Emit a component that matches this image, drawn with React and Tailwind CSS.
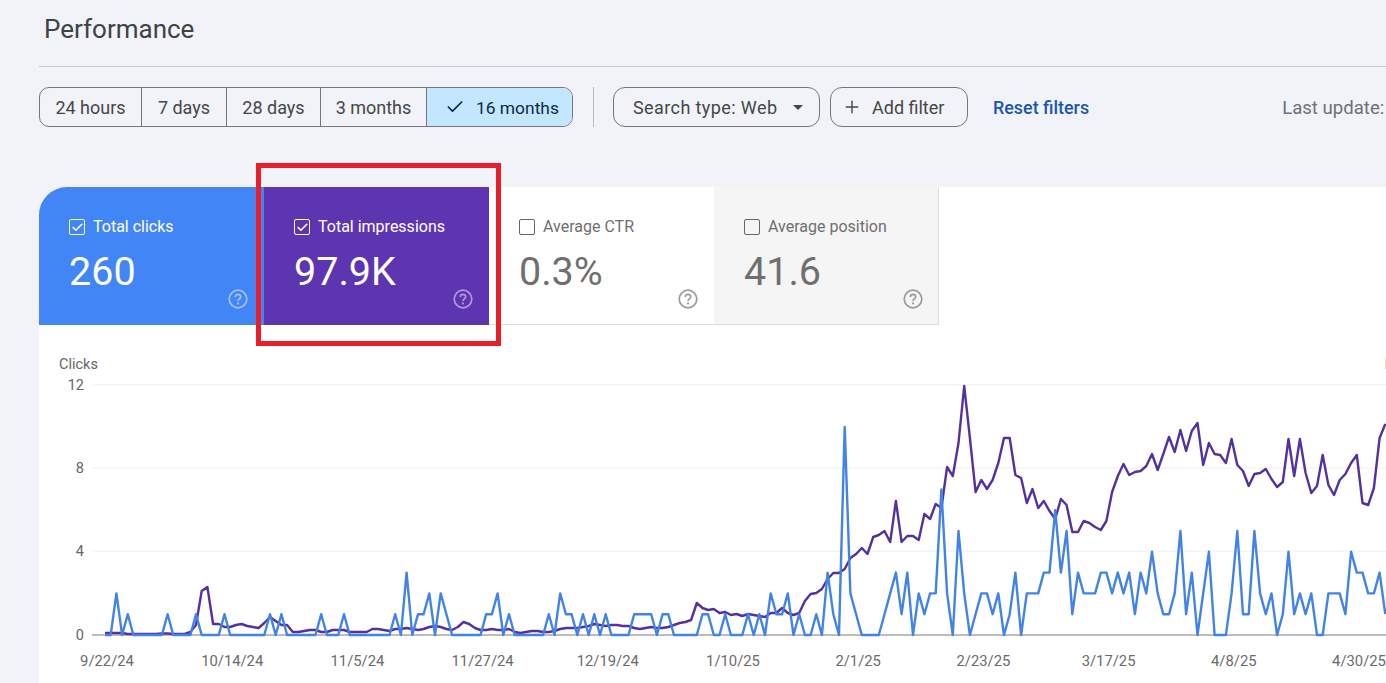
import { Check, Plus } from "lucide-react";

const ranges = [
  { label: "24 hours", width: "w-[102px]" },
  { label: "7 days", width: "w-[85px]" },
  { label: "28 days", width: "w-[94px]" },
  { label: "3 months", width: "w-[106px]" },
];

const metrics = [
  { label: "Total clicks", value: "260", on: true, box: "bg-[#4285f4] text-white rounded-tl-[28px]", help: "text-white/50" },
  { label: "Total impressions", value: "97.9K", on: true, box: "bg-[#5e35b1] text-white", help: "text-white/50" },
  { label: "Average CTR", value: "0.3%", on: false, box: "bg-white text-[#6f6f6f] shadow-[inset_0_-1px_0_#dddddd]", help: "text-[#9a9a9a]" },
  { label: "Average position", value: "41.6", on: false, box: "bg-[#f5f5f5] text-[#6f6f6f] shadow-[inset_0_-1px_0_#dddddd,inset_-1px_0_0_#dddddd]", help: "text-[#9a9a9a]" },
];

// one value per day from 9/22/24
const clicks = [
  0,0,2,0,1,0,0,0,0,0,0,1,0,0,0,0,1,0,0,0,0,1,0,0,0,0,0,0,0,1,
  0,1,0,0,0,0,0,0,1,0,0,0,1,0,0,0,0,0,0,0,0,1,0,3,0,1,1,2,0,2,
  1,0,0,0,0,0,0,1,1,2,0,1,0,0,0,0,0,0,1,0,2,1,1,0,1,0,1,0,1,0,
  0,0,0,1,1,1,1,0,1,1,0,0,0,0,0,1,1,0,0,1,0,0,0,1,0,1,0,2,1,1,
  2,0,1,0,0,1,0,3,1,0,10,2,1,0,0,0,0,1,2,3,1,3,0,2,1,2,2,7,2,0,
  5,2,0,1,2,2,1,2,0,1,3,0,2,2,2,3,3,6,3,5,1,3,2,2,2,3,3,2,3,2,
  3,1,3,2,4,2,1,1,2,5,1,3,0,2,4,0,0,0,2,5,1,1,5,2,1,2,0,1,4,1,
  2,1,2,0,0,2,2,2,1,4,3,3,2,2,3,1,
];

// pixels above the baseline
const impressions = [
  2,2,2,2,1,1,1,1,1,1,1.5,1.5,1,1,1,3,10,44,48,11,11,8,8,10,11,9,8,7,12,18,
  14,10,10,3,3,4,5,5,3,3,5,5,5,3,3,3,3,6,6,5,4,6,6,7,6,5,6,8,9,8,
  6,5,8,13,11,7,5,5,6,5,5,6,3,2,3,4,4,3,3,4,6,7,7,7,8,9,11,10,9,10,
  10,9,9,7,6,7,8,7,7,8,10,12,13,15,32,27,25,26,22,23,20,21,19,21,20,19,18,22,22,27,
  22,20,22,34,41,42,46,56,62,62,66,77,81,87,81,98,100,104,93,134,93,99,99,95,121,116,131,127,168,159,
  192,249,197,143,155,146,155,172,197,197,160,157,132,146,127,134,124,116,136,130,103,103,114,112,108,105,114,143,159,171,
  160,163,164,169,181,165,181,198,183,205,184,204,212,170,192,181,180,172,196,170,164,149,161,162,166,156,148,153,196,159,
  196,162,142,149,180,150,140,155,161,172,180,132,130,147,197,211,
];

const X0 = 105;
const STEP = 5.69;
const BASE = 635;

const clickPoints = clicks.map((v, i) => `${(X0 + i * STEP).toFixed(1)},${(BASE - v * 20.8).toFixed(1)}`).join(" ");
const impressionPoints = impressions.map((h, i) => `${(X0 + i * STEP).toFixed(1)},${BASE - h}`).join(" ");

const yTicks = [
  { label: "12", y: 385 },
  { label: "8", y: 468 },
  { label: "4", y: 551 },
];

const dates = ["9/22/24", "10/14/24", "11/5/24", "11/27/24", "12/19/24", "1/10/25", "2/1/25", "2/23/25", "3/17/25", "4/8/25", "4/30/25"];

function HelpIcon({ className }) {
  return (
    <svg width="20" height="20" viewBox="0 0 20 20" fill="none" className={className}>
      <circle cx="10" cy="10" r="8.8" stroke="currentColor" strokeWidth="1.7" />
      <path d="M7.3 8a2.7 2.7 0 0 1 5.4 0c0 1.8-2.7 2-2.7 3.9" stroke="currentColor" strokeWidth="1.7" />
      <circle cx="10" cy="14.4" r="1.05" fill="currentColor" />
    </svg>
  );
}

function MetricCard({ label, value, on, box, help }) {
  return (
    <div className={`relative w-[225px] h-[138px] pl-[30px] pt-[30px] ${box}`}>
      <div className="flex items-center gap-2 h-5">
        {on ? (
          <span className="flex items-center justify-center w-4 h-4 rounded-[2px] border border-white">
            <Check size={13} strokeWidth={3} />
          </span>
        ) : (
          <span className="w-4 h-4 rounded-[2px] border border-[#666666]" />
        )}
        <span className="text-[16px] whitespace-nowrap">{label}</span>
      </div>
      <div className="text-[39.5px] leading-[46px] mt-[12px]">{value}</div>
      <HelpIcon className={`absolute right-[16px] bottom-[16px] ${help}`} />
    </div>
  );
}

function Chart() {
  return (
    <svg viewBox="39 375 1347 308" className="block w-[1347px] h-[308px]" style={{ fontFamily: "Roboto, sans-serif" }}>
      {yTicks.map((t) => (
        <g key={t.label}>
          <line x1="92" x2="1386" y1={t.y} y2={t.y} stroke="#eeeeee" />
          <text x="84" y={t.y + 5} textAnchor="end" fontSize="14.5" fill="#666666">{t.label}</text>
        </g>
      ))}
      <text x="84" y="640" textAnchor="end" fontSize="14.5" fill="#666666">0</text>
      <line x1="92" x2="1386" y1={BASE} y2={BASE} stroke="#7a7a7a" />
      <polyline points={impressionPoints} fill="none" stroke="#55309f" strokeWidth="2.4" strokeLinejoin="round" />
      <polyline points={clickPoints} fill="none" stroke="#4283e8" strokeWidth="2.4" strokeLinejoin="round" />
      {dates.map((d, i) => (
        <text key={d} x={107 + i * 125.2} y="666" textAnchor="middle" fontSize="14.8" fill="#6b6b6b">{d}</text>
      ))}
    </svg>
  );
}

export default function App() {
  return (
    <div className="relative w-[1386px] h-[683px] overflow-hidden bg-[#f1f3f8] pl-[39px] font-['Roboto',sans-serif]">
      <h1 className="pl-[5px] pt-[12px] h-[67px] text-[26px] leading-[34px] text-[#3f4245] border-b border-[#c9cbd0]">
        Performance
      </h1>

      <div className="flex items-center h-[40px] mt-[20px] text-[18px] text-[#444746] whitespace-nowrap">
        <div className="flex h-full rounded-[10px] border border-[#747775] overflow-hidden">
          {ranges.map((r) => (
            <div key={r.label} className={`flex items-center justify-center border-r border-[#747775] ${r.width}`}>
              {r.label}
            </div>
          ))}
          <div className="flex items-center gap-[11px] w-[145px] pl-[18px] bg-[#c2e7ff] text-[#0f2a3f] text-[17.4px]">
            <Check size={20} strokeWidth={2} />
            <span className="pt-[2px]">16 months</span>
          </div>
        </div>
        <div className="w-px h-full bg-[#b9bbc0] ml-[20px]" />
        <div className="flex items-center h-full w-[207px] ml-[19px] pl-[19px] rounded-[12px] border border-[#747775] tracking-[0.4px]">
          Search type: Web
          <span className="ml-[16px] w-0 h-0 border-x-[5px] border-x-transparent border-t-[5px] border-t-[#444746]" />
        </div>
        <div className="flex items-center h-full w-[138px] ml-[10px] pl-[11px] gap-[10px] rounded-[12px] border border-[#747775]">
          <Plus size={20} strokeWidth={1.7} />
          Add filter
        </div>
        <span className="ml-[25px] pt-[2px] text-[#1a56b0] font-medium text-[17.9px]">Reset filters</span>
        <span className="ml-[193px] pt-[3px] text-[#6d7074] text-[18.6px]">Last update:</span>
      </div>

      <div className="mt-[60px] h-[600px] bg-white rounded-tl-[28px] rounded-bl-[12px]">
        <div className="flex">
          {metrics.map((m) => (
            <MetricCard key={m.label} {...m} />
          ))}
        </div>
        <div className="flex justify-between w-[1425px] pl-[20px] h-[50px] pt-[30px] text-[14.5px] leading-5 text-[#666666]">
          <span>Clicks</span>
          <span>Impressions</span>
        </div>
        <Chart />
      </div>

      <div className="absolute left-[256px] top-[163px] w-[245px] h-[183px] border-[5px] border-[#e81e2a]" />
    </div>
  );
}
